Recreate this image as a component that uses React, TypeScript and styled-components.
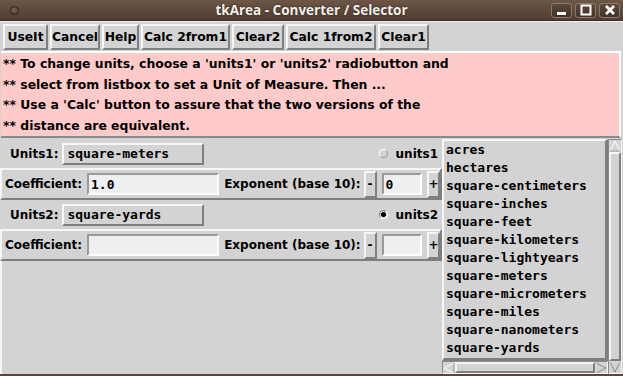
import styled, { createGlobalStyle } from "styled-components";

const Global = createGlobalStyle`
  html, body {
    margin: 0;
    padding: 0;
    background: #d3d3d3;
  }
`;

const UI = `"DejaVu Sans", "Liberation Sans", sans-serif`;
const NARROW = `"Open Sans", "DejaVu Sans", sans-serif`;
const MONO = `"DejaVu Sans Mono", "Liberation Mono", monospace`;

const buttons = [
  { label: "UseIt", w: 45 },
  { label: "Cancel", w: 50 },
  { label: "Help", w: 37 },
  { label: "Calc 2from1", w: 89 },
  { label: "Clear2", w: 52 },
  { label: "Calc 1from2", w: 90 },
  { label: "Clear1", w: 51 },
];

const units = [
  "acres",
  "hectares",
  "square-centimeters",
  "square-inches",
  "square-feet",
  "square-kilometers",
  "square-lightyears",
  "square-meters",
  "square-micrometers",
  "square-miles",
  "square-nanometers",
  "square-yards",
];

const App = () => {
  return (
    <>
      <Global />
      <Window>
        <TitleBar>
          <MenuDot />
          <Title>tkArea - Converter / Selector</Title>
          <WinButtons>
            <WinButton>
              <svg width="12" height="12" viewBox="0 0 12 12">
                <rect x="1" y="8" width="9" height="3" fill="#fff" />
              </svg>
            </WinButton>
            <WinButton>
              <svg width="12" height="12" viewBox="0 0 12 12">
                <rect x="1.5" y="1.5" width="9" height="9" fill="none" stroke="#fff" strokeWidth="2" />
              </svg>
            </WinButton>
            <WinButton>
              <svg width="12" height="12" viewBox="0 0 12 12">
                <path d="M2 2 L10 10 M10 2 L2 10" stroke="#fff" strokeWidth="2.6" />
              </svg>
            </WinButton>
          </WinButtons>
        </TitleBar>

        <Toolbar>
          {buttons.map((b) => (
            <ToolButton key={b.label} $w={b.w}>
              {b.label}
            </ToolButton>
          ))}
        </Toolbar>

        <Message>
          <div>** To change units, choose a 'units1' or 'units2' radiobutton and</div>
          <div>** select from listbox to set a Unit of Measure. Then ...</div>
          <div>** Use a 'Calc' button to assure that the two versions of the</div>
          <div>** distance are equivalent.</div>
        </Message>

        <Main>
          <LeftPanel>
            <UnitsRow>
              <Label>Units1:</Label>
              <UnitBox>square-meters</UnitBox>
              <Radio>
                <RadioDot $on={false} />
                units1
              </Radio>
            </UnitsRow>
            <CoefFrame>
              <Label>Coefficient:</Label>
              <Entry $w={134}>1.0</Entry>
              <Label>Exponent (base 10):</Label>
              <SmallButton>-</SmallButton>
              <Entry $w={41}>0</Entry>
              <SmallButton>+</SmallButton>
            </CoefFrame>
            <UnitsRow>
              <Label>Units2:</Label>
              <UnitBox>square-yards</UnitBox>
              <Radio>
                <RadioDot $on={true} />
                units2
              </Radio>
            </UnitsRow>
            <CoefFrame>
              <Label>Coefficient:</Label>
              <Entry $w={134}></Entry>
              <Label>Exponent (base 10):</Label>
              <SmallButton>-</SmallButton>
              <Entry $w={41}></Entry>
              <SmallButton>+</SmallButton>
            </CoefFrame>
            <Filler />
          </LeftPanel>

          <ListPane>
            <ListBox>
              {units.map((u) => (
                <ListItem key={u}>{u}</ListItem>
              ))}
            </ListBox>
            <VScroll>
              <Arrow>
                <svg width="12" height="12" viewBox="0 0 12 12">
                  <polygon points="6,1 11,11 1,11" fill="#d3d3d3" stroke="#fff" />
                  <path d="M11 11 L1 11" stroke="#8a8a8a" />
                </svg>
              </Arrow>
              <Slider />
              <Arrow>
                <svg width="12" height="12" viewBox="0 0 12 12">
                  <polygon points="1,1 11,1 6,11" fill="#d3d3d3" stroke="#8a8a8a" />
                  <path d="M1 1 L11 1" stroke="#fff" />
                </svg>
              </Arrow>
            </VScroll>
            <HScroll>
              <Arrow>
                <svg width="12" height="12" viewBox="0 0 12 12">
                  <polygon points="1,6 11,1 11,11" fill="#d3d3d3" stroke="#fff" />
                  <path d="M11 1 L11 11" stroke="#8a8a8a" />
                </svg>
              </Arrow>
              <HSlider />
              <Arrow>
                <svg width="12" height="12" viewBox="0 0 12 12">
                  <polygon points="1,1 11,6 1,11" fill="#d3d3d3" stroke="#8a8a8a" />
                  <path d="M1 1 L1 11" stroke="#fff" />
                </svg>
              </Arrow>
            </HScroll>
          </ListPane>
        </Main>
      </Window>
    </>
  );
};

export default App;

const Window = styled.div`
  width: 623px;
  height: 376px;
  display: flex;
  flex-direction: column;
  background: #d3d3d3;
  overflow: hidden;
  box-sizing: border-box;
  border-bottom: 2px solid #5a4538;
`;

const TitleBar = styled.div`
  height: 20px;
  flex: none;
  display: grid;
  grid-template-columns: 1fr auto 1fr;
  align-items: center;
  background: linear-gradient(#6d5747, #4e3d31);
  border-bottom: 1px solid #3a2d24;
`;

const MenuDot = styled.div`
  width: 7px;
  height: 7px;
  margin-left: 10px;
  border-radius: 50%;
  border: 1px solid #2f241d;
  background: radial-gradient(circle at 40% 40%, #7a6555, #4a3a2f);
`;

const Title = styled.div`
  font-family: ${NARROW};
  font-weight: bold;
  font-size: 13.5px;
  color: #f4f0ec;
  text-shadow: 0 0 2px #2a1f18;
`;

const WinButtons = styled.div`
  display: flex;
  justify-content: flex-end;
  gap: 3px;
  padding-right: 3px;
`;

const WinButton = styled.div`
  width: 21px;
  height: 15px;
  box-sizing: border-box;
  border: 1px solid #8f7a6a;
  border-radius: 3px;
  background: linear-gradient(#5e4a3c, #3f3128);
  display: flex;
  align-items: center;
  justify-content: center;
`;

const Toolbar = styled.div`
  flex: none;
  display: flex;
  gap: 2px;
  padding: 2px 0 1px 3px;
  border-top: 1px solid #efefef;
`;

const raised = `
  border-style: solid;
  border-width: 2px;
  border-color: #f6f6f6 #7f7f7f #7f7f7f #f6f6f6;
`;

const ToolButton = styled.div<{ $w: number }>`
  ${raised}
  width: ${(p) => p.$w}px;
  height: 26px;
  box-sizing: border-box;
  display: flex;
  align-items: center;
  justify-content: center;
  white-space: nowrap;
  font-family: ${UI};
  font-weight: bold;
  font-size: 12.3px;
  color: #000;
  background: #d3d3d3;
`;

const Message = styled.div`
  flex: none;
  height: 87px;
  box-sizing: border-box;
  margin: 0 2px 0 1px;
  padding: 1px 0 0 2px;
  background: #ffcaca;
  border-top: 2px solid #fff;
  border-right: 2px solid #fff;
  border-bottom: 2px solid #8a8a8a;
  font-family: ${UI};
  font-weight: bold;
  font-size: 12.4px;
  line-height: 20.5px;
  color: #000;
  white-space: nowrap;
`;

const Main = styled.div`
  flex: 1;
  display: flex;
  min-height: 0;
`;

const LeftPanel = styled.div`
  width: 442px;
  flex: none;
  display: flex;
  flex-direction: column;
  padding-top: 1px;
`;

const UnitsRow = styled.div`
  height: 29px;
  box-sizing: border-box;
  display: flex;
  align-items: center;
  padding: 0 4px 0 10px;
  gap: 4px;
`;

const Label = styled.span`
  font-family: ${UI};
  font-weight: bold;
  font-size: 12px;
  color: #000;
  white-space: nowrap;
`;

const UnitBox = styled.div`
  ${raised}
  width: 142px;
  height: 22px;
  box-sizing: border-box;
  display: flex;
  align-items: center;
  padding-left: 3px;
  font-family: ${MONO};
  font-weight: bold;
  font-size: 13px;
  background: #d3d3d3;
`;

const Radio = styled.div`
  margin-left: auto;
  display: flex;
  align-items: center;
  gap: 8px;
  font-family: ${UI};
  font-weight: bold;
  font-size: 12px;
`;

const RadioDot = styled.span<{ $on: boolean }>`
  width: 9px;
  height: 9px;
  box-sizing: border-box;
  border-radius: 50%;
  border: 1px solid;
  border-color: ${(p) => (p.$on ? "#8a8a8a #fff #fff #8a8a8a" : "#ffffff #9a9a9a #9a9a9a #ffffff")};
  background: ${(p) => (p.$on ? "radial-gradient(circle, #000 0 2.2px, #d3d3d3 2.6px)" : "#d3d3d3")};
`;

const CoefFrame = styled.div`
  ${raised}
  height: 32px;
  box-sizing: border-box;
  display: flex;
  align-items: center;
  padding-left: 3px;
  gap: 3px;
`;

const Entry = styled.div<{ $w: number }>`
  width: ${(p) => p.$w}px;
  height: 22px;
  box-sizing: border-box;
  border-style: solid;
  border-width: 2px;
  border-color: #9a9a9a #fff #fff #9a9a9a;
  background: #efefef;
  display: flex;
  align-items: center;
  padding-left: 2px;
  margin: 0 2px;
  font-family: ${MONO};
  font-weight: bold;
  font-size: 13px;
`;

const SmallButton = styled.div`
  ${raised}
  width: 13px;
  height: 27px;
  box-sizing: border-box;
  display: flex;
  align-items: center;
  justify-content: center;
  font-family: ${UI};
  font-weight: bold;
  font-size: 12px;
  background: #d3d3d3;
`;

const Filler = styled.div`
  flex: 1;
  border-left: 2px solid #f6f6f6;
`;

const ListPane = styled.div`
  flex: 1;
  display: grid;
  grid-template-columns: 1fr 14px;
  grid-template-rows: 1fr 13px;
  padding: 1px 1px 0 0;
`;

const ListBox = styled.div`
  ${raised}
  border-width: 2px 3px 3px 2px;
  box-sizing: border-box;
  display: flex;
  flex-direction: column;
  padding: 0 0 0 2px;
  overflow: hidden;
`;

const ListItem = styled.div`
  height: 18px;
  line-height: 18px;
  font-family: ${MONO};
  font-weight: bold;
  font-size: 13px;
  color: #000;
  white-space: nowrap;
`;

const VScroll = styled.div`
  grid-row: 1 / span 2;
  grid-column: 2;
  display: flex;
  flex-direction: column;
  border: 1px solid;
  border-color: #8a8a8a #f6f6f6 #f6f6f6 #8a8a8a;
`;

const Arrow = styled.div`
  flex: none;
  width: 12px;
  height: 12px;
  display: flex;
`;

const Slider = styled.div`
  ${raised}
  flex: 1;
`;

const HScroll = styled.div`
  grid-row: 2;
  grid-column: 1;
  display: flex;
  border: 1px solid;
  border-color: #8a8a8a #f6f6f6 #f6f6f6 #8a8a8a;
`;

const HSlider = styled.div`
  ${raised}
  flex: 1;
`;
